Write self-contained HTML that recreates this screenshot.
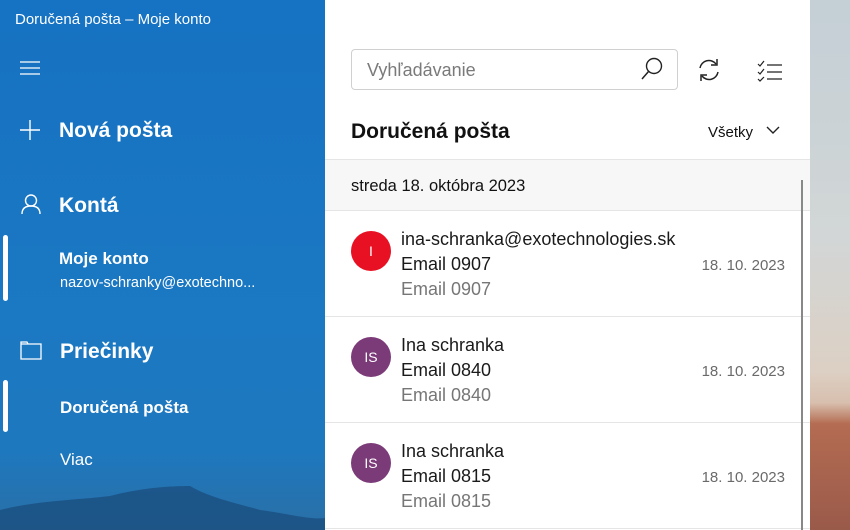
<!DOCTYPE html>
<html><head><meta charset="utf-8"><style>
*{margin:0;padding:0;box-sizing:border-box}
body{width:850px;height:530px;overflow:hidden;font-family:"Segoe UI","Liberation Sans",sans-serif;position:relative;background:#fff}
.side{position:absolute;left:0;top:0;width:325px;height:530px;background:linear-gradient(180deg,#1672c2 0%,#1b78c2 60%,#1e78be 85%,#2a6fa6 100%);color:#fff;overflow:hidden}
.t{position:absolute;white-space:nowrap}
.bar{position:absolute;left:3px;width:5px;background:#fff;border-radius:3px}
.main{position:absolute;left:325px;top:0;width:485px;height:530px;background:#fff}
.right{position:absolute;left:810px;top:0;width:40px;height:530px;background:linear-gradient(180deg,#c4cfd6 0%,#d2d6d6 45%,#dcd0c4 70%,#d8bfae 76%,#b46c52 80%,#9a5a4a 100%)}
.row{position:absolute;left:0;width:485px;height:106px;border-bottom:1px solid #e5e5e5}
.av{position:absolute;left:26px;top:20px;width:40px;height:40px;border-radius:50%;color:#fff;font-size:14px;text-align:center;line-height:40px}
.l{position:absolute;left:76px;font-size:18px;color:#1a1a1a;white-space:nowrap}
.g{color:#767676}
.d{position:absolute;right:25px;top:46px;font-size:15px;color:#6a6a6a}
</style></head><body>
<div class="side">
<div class="t" style="left:15px;top:11px;font-size:15px">Doručená pošta – Moje konto</div>
<svg class="t" style="left:20px;top:61px" width="20" height="15"><path d="M0 1H20M0 7H20M0 13H20" stroke="#fff" stroke-width="1.3"/></svg>
<svg class="t" style="left:20px;top:120px" width="20" height="20"><path d="M10 0V20M0 10H20" stroke="#fff" stroke-width="1.4"/></svg>
<div class="t" style="left:59px;top:119px;font-size:21px;font-weight:bold">Nová pošta</div>
<svg class="t" style="left:21px;top:194px" width="20" height="20"><circle cx="10" cy="6.5" r="5.5" fill="none" stroke="#fff" stroke-width="1.4"/><path d="M1 20C1 14 5 12 10 12S19 14 19 20" fill="none" stroke="#fff" stroke-width="1.4"/></svg>
<div class="t" style="left:59px;top:194px;font-size:21px;font-weight:bold">Kontá</div>
<div class="bar" style="top:235px;height:66px"></div>
<div class="t" style="left:59px;top:249px;font-size:17px;font-weight:bold">Moje konto</div>
<div class="t" style="left:60px;top:275px;font-size:14.5px">nazov-schranky@exotechno...</div>
<svg class="t" style="left:20px;top:340px" width="22" height="20"><path d="M1 2H7L8 4H21V19H1Z M1 4H8" fill="none" stroke="#fff" stroke-width="1.3"/></svg>
<div class="t" style="left:60px;top:340px;font-size:21px;font-weight:bold">Priečinky</div>
<div class="bar" style="top:380px;height:52px"></div>
<div class="t" style="left:60px;top:398px;font-size:17px;font-weight:bold">Doručená pošta</div>
<div class="t" style="left:60px;top:450px;font-size:17px">Viac</div>
<svg class="t" style="left:0;top:470px" width="325" height="60"><path d="M0 60V40C40 30 80 30 110 26 140 18 170 16 190 16 210 28 240 34 260 40 290 44 310 50 325 48V60Z" fill="#1a4f80" opacity=".8"/></svg>
</div>
<div class="main">
<div style="position:absolute;left:26px;top:49px;width:327px;height:41px;border:1px solid #d0d0d0;border-radius:4px"></div>
<div class="t" style="left:42px;top:60px;font-size:18px;color:#7a7a7a">Vyhľadávanie</div>
<svg class="t" style="left:315px;top:57px" width="24" height="24"><circle cx="14" cy="9" r="7.5" fill="none" stroke="#222" stroke-width="1.4"/><path d="M8.5 14.5L2 22" stroke="#222" stroke-width="1.5"/></svg>
<svg class="t" style="left:372px;top:58px" width="24" height="24"><path d="M3 10A9 9 0 0 1 19 6 M21 14A9 9 0 0 1 5 18" fill="none" stroke="#222" stroke-width="1.5"/><path d="M20 1V7H14 M4 23V17H10" fill="none" stroke="#222" stroke-width="1.5"/></svg>
<svg class="t" style="left:432px;top:60px" width="26" height="22"><path d="M1 4L3 6 7 1 M1 12L3 14 7 9 M1 19L3 21 7 17" fill="none" stroke="#222" stroke-width="1.2"/><path d="M10 5H25M10 12H25M10 19H25" stroke="#222" stroke-width="1.3"/></svg>
<div class="t" style="left:26px;top:120px;font-size:21px;font-weight:bold;color:#111">Doručená pošta</div>
<div class="t" style="left:383px;top:124px;font-size:15px;color:#111">Všetky</div>
<svg class="t" style="left:441px;top:126px" width="14" height="9"><path d="M1 1L7 7 13 1" fill="none" stroke="#222" stroke-width="1.4"/></svg>
<div style="position:absolute;left:0;top:159px;width:485px;height:52px;background:#f7f7f7;border-top:1px solid #e5e5e5;border-bottom:1px solid #e5e5e5"></div>
<div class="t" style="left:26px;top:177px;font-size:16.5px;color:#111">streda 18. októbra 2023</div>
<div class="row" style="top:211px"><div class="av" style="background:#e81123">I</div>
<div class="l" style="top:18px">ina-schranka@exotechnologies.sk</div><div class="l" style="top:43px">Email 0907</div><div class="l g" style="top:68px">Email 0907</div><div class="d">18. 10. 2023</div></div>
<div class="row" style="top:317px"><div class="av" style="background:#7b3a78">IS</div>
<div class="l" style="top:18px">Ina schranka</div><div class="l" style="top:43px">Email 0840</div><div class="l g" style="top:68px">Email 0840</div><div class="d">18. 10. 2023</div></div>
<div class="row" style="top:423px"><div class="av" style="background:#7b3a78">IS</div>
<div class="l" style="top:18px">Ina schranka</div><div class="l" style="top:43px">Email 0815</div><div class="l g" style="top:68px">Email 0815</div><div class="d">18. 10. 2023</div></div>
<div style="position:absolute;left:476px;top:180px;width:2px;height:350px;background:#888"></div>
</div>
<div class="right"></div>
</body></html>
